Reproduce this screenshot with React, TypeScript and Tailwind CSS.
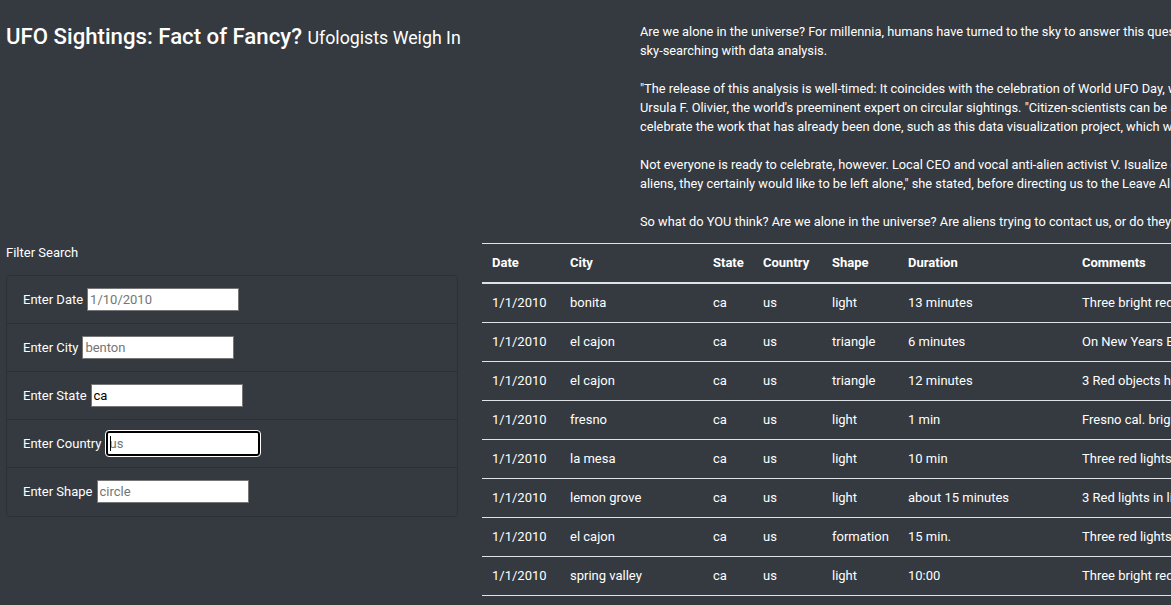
import React from 'react';

interface Sighting {
  datetime: string;
  city: string;
  state: string;
  country: string;
  shape: string;
  duration: string;
  comments: string;
}

const sightings: Sighting[] = [
  { datetime: '1/1/2010', city: 'bonita', state: 'ca', country: 'us', shape: 'light', duration: '13 minutes', comments: 'Three bright red lights witnessed floating stationary over San Diego New Years Day 2010' },
  { datetime: '1/1/2010', city: 'el cajon', state: 'ca', country: 'us', shape: 'triangle', duration: '6 minutes', comments: 'On New Years Eve, my husband and I were outside watching the fireworks when we noticed an odd triangle of lights' },
  { datetime: '1/1/2010', city: 'el cajon', state: 'ca', country: 'us', shape: 'triangle', duration: '12 minutes', comments: '3 Red objects heading north at a low altitude, forming a triangle formation' },
  { datetime: '1/1/2010', city: 'fresno', state: 'ca', country: 'us', shape: 'light', duration: '1 min', comments: 'Fresno cal. bright orange light moving slowly from west to east' },
  { datetime: '1/1/2010', city: 'la mesa', state: 'ca', country: 'us', shape: 'light', duration: '10 min', comments: 'Three red lights in a triangular pattern hovering over the hills' },
  { datetime: '1/1/2010', city: 'lemon grove', state: 'ca', country: 'us', shape: 'light', duration: 'about 15 minutes', comments: '3 Red lights in line formation moving slowly to the east, then fading out' },
  { datetime: '1/1/2010', city: 'el cajon', state: 'ca', country: 'us', shape: 'formation', duration: '15 min.', comments: 'Three red lights moving in formation over east county after midnight' },
  { datetime: '1/1/2010', city: 'spring valley', state: 'ca', country: 'us', shape: 'light', duration: '10:00', comments: 'Three bright red lights seen over Spring Valley after the fireworks' },
];

const filters = [
  { id: 'datetime', label: 'Enter Date', placeholder: '1/10/2010', value: '' },
  { id: 'city', label: 'Enter City', placeholder: 'benton', value: '' },
  { id: 'state', label: 'Enter State', placeholder: 'ca', value: 'ca' },
  { id: 'country', label: 'Enter Country', placeholder: 'us', value: '' },
  { id: 'shape', label: 'Enter Shape', placeholder: 'circle', value: '' },
];

const FilterItem: React.FC<{ id: string; label: string; placeholder: string; value: string }> = ({ id, label, placeholder, value }) => {
  const focused = id === 'country';
  return (
    <li className="flex items-center gap-[4px] h-[48px] px-[16px] border-b border-[#2b3035] last:border-b-0">
      <label htmlFor={id} className="leading-[19px]">{label}</label>
      {focused ? (
        <span className="relative flex">
          <input
            id={id}
            type="text"
            placeholder={placeholder}
            defaultValue={value}
            className="w-[154px] h-[25px] px-[2px] bg-white text-black text-[13px] border-2 border-black rounded-[3px] outline outline-1 outline-white placeholder:text-[#757575]"
          />
          <span className="absolute left-[4px] top-[5px] w-px h-[15px] bg-black" />
        </span>
      ) : (
        <input
          id={id}
          type="text"
          placeholder={placeholder}
          defaultValue={value}
          className="w-[152px] h-[23px] px-[2px] bg-white text-black text-[13px] border border-[#767676] outline-none placeholder:text-[#757575]"
        />
      )}
    </li>
  );
};

export default function App() {
  return (
    <div className="w-[1171px] h-[605px] overflow-hidden bg-[#343a40] text-white font-['Roboto',sans-serif] text-[13px] leading-[19px]">
      <div className="w-[1900px]">
        {/* header row */}
        <div className="flex">
          <div className="w-[640px] pl-[6px] pt-[21px]">
            <h1 className="font-medium text-[22.2px] leading-[30px]">
              UFO Sightings: Fact of Fancy? <small className="font-normal text-[17.8px]">Ufologists Weigh In</small>
            </h1>
          </div>
          <div className="pt-[21.5px] pb-[12.5px] whitespace-nowrap flex flex-col gap-[19px] text-[12.8px]">
            <p>
              Are we alone in the universe? For millennia, humans have turned to the sky to answer this question. Today, with the help of modern technology, we can supplement our
              <br />
              sky-searching with data analysis.
            </p>
            <p>
              "The release of this analysis is well-timed: It coincides with the celebration of World UFO Day, which is an opportunity for all of us to look up," said Dr.
              <br />
              Ursula F. Olivier, the world's preeminent expert on circular sightings. "Citizen-scientists can be an important part of the search. Today, we invite readers to
              <br />
              celebrate the work that has already been done, such as this data visualization project, which will help everyone explore the data for themselves."
            </p>
            <p>
              Not everyone is ready to celebrate, however. Local CEO and vocal anti-alien activist V. Isualize cautioned against the attention. "Even if there are
              <br />
              aliens, they certainly would like to be left alone," she stated, before directing us to the Leave Aliens Alone website.
            </p>
            <p>
              So what do YOU think? Are we alone in the universe? Are aliens trying to contact us, or do they want to be left alone? Search the data for yourself below.
            </p>
          </div>
        </div>

        {/* filters + table */}
        <div className="flex">
          <div className="w-[482px] pl-[6px]">
            <div className="leading-[19px]">Filter Search</div>
            <ul className="mt-[12.5px] w-[452px] border border-[#2b3035] rounded-[4px]">
              {filters.map((f) => (
                <FilterItem key={f.id} {...f} />
              ))}
            </ul>
          </div>
          <table className="border-collapse text-left whitespace-nowrap">
            <thead>
              <tr className="border-t border-[#dee2e6] border-b-2">
                <th className="w-[78px] pl-[10px] py-[10px] leading-[18px] font-bold">Date</th>
                <th className="w-[143px] pl-[10px] py-[10px] leading-[18px] font-bold">City</th>
                <th className="w-[50px] pl-[10px] py-[10px] leading-[18px] font-bold">State</th>
                <th className="w-[69px] pl-[10px] py-[10px] leading-[18px] font-bold">Country</th>
                <th className="w-[76px] pl-[10px] py-[10px] leading-[18px] font-bold">Shape</th>
                <th className="w-[174px] pl-[10px] py-[10px] leading-[18px] font-bold">Duration</th>
                <th className="pl-[10px] py-[10px] leading-[18px] font-bold">Comments</th>
              </tr>
            </thead>
            <tbody>
              {sightings.map((s, i) => (
                <tr key={i} className="border-b border-[#dee2e6]">
                  <td className="pl-[10px] py-[10px] leading-[18px]">{s.datetime}</td>
                  <td className="pl-[10px] py-[10px] leading-[18px]">{s.city}</td>
                  <td className="pl-[10px] py-[10px] leading-[18px]">{s.state}</td>
                  <td className="pl-[10px] py-[10px] leading-[18px]">{s.country}</td>
                  <td className="pl-[10px] py-[10px] leading-[18px]">{s.shape}</td>
                  <td className="pl-[10px] py-[10px] leading-[18px]">{s.duration}</td>
                  <td className="pl-[10px] py-[10px] leading-[18px]">{s.comments}</td>
                </tr>
              ))}
            </tbody>
          </table>
        </div>
      </div>
    </div>
  );
}
